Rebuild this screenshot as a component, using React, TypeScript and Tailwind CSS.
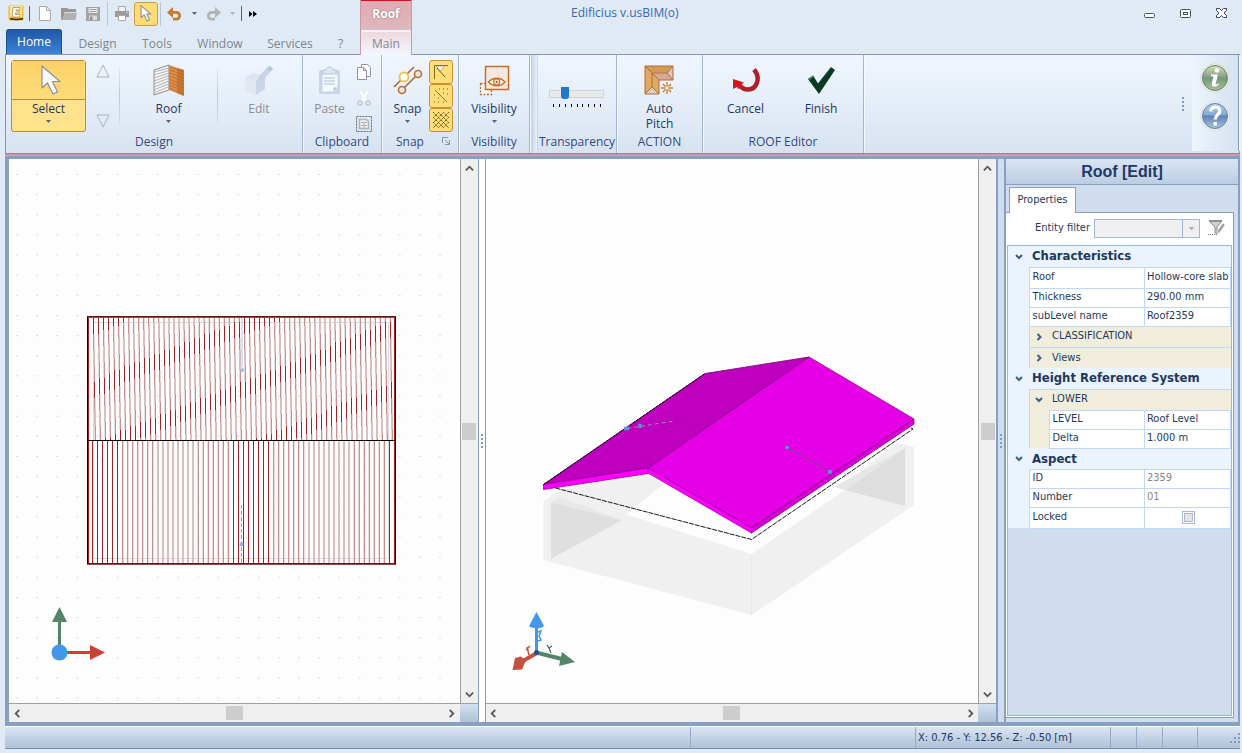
import React, { useState } from "react";

const MENU = [
  { label: "Design", width: "w-[71px]" },
  { label: "Tools", width: "w-[48px]" },
  { label: "Window", width: "w-[78px]" },
  { label: "Services", width: "w-[62px]" },
  { label: "?", width: "w-[39px]" },
];

const Caret: React.FC<{ className?: string }> = ({ className = "text-[#5a6472]" }) => (
  <svg width="5" height="3" viewBox="0 0 5 3" className={className}>
    <path d="M0 0h5L2.5 3z" fill="currentColor" />
  </svg>
);

const Divider: React.FC = () => (
  <div className="my-2 w-px self-stretch bg-gradient-to-b from-[#dfe8f3] via-[#b9c7da] to-[#d2deed]" />
);

/* ---------- quick access icons ---------- */

const AppIcon = () => (
  <svg width="17" height="17" viewBox="0 0 17 17">
    <rect x="0.500" y="0.500" width="15" height="15" rx="1" fill="#f0bd3a" />
    <rect x="2" y="1" width="12" height="11" fill="#fbe7a3" />
    <path d="M5 2.500h7v2.500H8v1h3v2H7.500v1.500H12V12H4z" fill="#fff" stroke="#a8822e" strokeWidth="0.700" />
    <path d="M2 13c4 1 9 1 13 0v1.500c-4 1-9 1-13 0z" fill="#302813" />
  </svg>
);

const NewIcon = () => (
  <svg width="12" height="15" viewBox="0 0 12 15">
    <path d="M0.500 0.500h7l4 4v10h-11z" fill="#fff" stroke="#a9a9a9" />
    <path d="M7.500 0.500v4h4" fill="none" stroke="#a9a9a9" />
  </svg>
);

const OpenIcon = () => (
  <svg width="16" height="14" viewBox="0 0 16 14">
    <path d="M0 1h6l1.500 1H15v4H3.500L2 13H1L0 12z" fill="#989898" />
    <path d="M3.500 5.500H16L14.500 13H2z" fill="#b2b2b2" />
    <path d="M3 5.500h13" stroke="#d8d8d8" />
  </svg>
);

const SaveIcon = () => (
  <svg width="14" height="14" viewBox="0 0 14 14">
    <path d="M0 0h14v14H0z" fill="#a3a3a3" />
    <path d="M2.500 1h9v5h-9z" fill="#e6ebf0" />
    <path d="M3.500 2.500h7M3.500 4.500h7" stroke="#a3a3a3" />
    <path d="M3 8.500h8V13H3z" fill="#d7dade" />
    <path d="M4 9.500h2.500V13H4z" fill="#8d8d8d" />
  </svg>
);

const PrintIcon = () => (
  <svg width="14" height="15" viewBox="0 0 14 15">
    <path d="M3.500 0.500h7v5h-7z" fill="#eef0f3" stroke="#a8a8a8" />
    <path d="M0 5h14v6H0z" fill="#9b9b9b" />
    <path d="M3.500 9.500h7v5h-7z" fill="#fff" stroke="#a8a8a8" />
    <path d="M11 6.500h1.500" stroke="#e6e6e6" />
  </svg>
);

const PointerIcon: React.FC<{ small?: boolean }> = ({ small }) => (
  <svg width={small ? 12 : 20} height={small ? 17 : 31} viewBox="0 0 20 31">
    <path
      d="M1 1v22l5.500-5L12 29l4.500-2-5-10.500H19z"
      fill="#f7f8f9"
      stroke="#8b8f96"
      strokeWidth={small ? 2 : 1.2}
      strokeLinejoin="round"
    />
  </svg>
);

const UndoIcon: React.FC<{ redo?: boolean }> = ({ redo }) => (
  <svg width="15" height="14" viewBox="0 0 15 14">
    <g transform={redo ? "translate(15 0) scale(-1 1)" : undefined} fill={redo ? "#b4b4b4" : "#c87a34"}>
      <path d="M0 5.500 6 0v4h3c3 0 5 2 5 4.700S12 13.500 9 13.500H6v-2.700h2.700c1.600 0 2.500-.9 2.500-2.100S10.300 6.800 8.700 6.800H6V11z" />
    </g>
  </svg>
);

/* ---------- ribbon icons ---------- */

const RoofIcon = () => (
  <svg width="32" height="34" viewBox="0 0 32 34">
    <path d="M1 6 16 1v25L1 31z" fill="#f4f4f4" stroke="#8d8d8d" />
    <path
      d="M1 8l15-4M1 11l15-4.500M1 14l15-5M1 17l15-5.500M1 20l15-6M1 23l15-6M1 26l15-6.500M1 29l15-6.500"
      stroke="#a3a3a3"
      strokeWidth="0.800"
    />
    <path d="m16 1 15 5v26l-15-6z" fill="#e0914a" />
    <path
      d="m16 3 15 5M16 6l15 5M16 9l15 5M16 12l15 5M16 15l15 6M16 18l15 6M16 21l15 6M16 24l15 6"
      stroke="#c07234"
      strokeWidth="1.200"
    />
    <path d="M24 4 31 6v26l-7-3z" fill="#bf6b2b" opacity="0.700" />
  </svg>
);

const EditIcon = () => (
  <svg width="30" height="32" viewBox="0 0 30 32" opacity="0.700">
    <path d="m1 13 8-5 12 3v13l-9 6-11-4z" fill="#d5dfec" />
    <path d="m12 16 9-5v13l-9 6z" fill="#bfcddf" />
    <path d="m1 13 11 3v14L1 26z" fill="#e0e6f0" />
    <path d="m12 18 3-7L25 1l4 3-10 11z" fill="#b8c7db" />
    <path d="m23 3 3-2 3 3-3 2z" fill="#9fb3cc" />
  </svg>
);

const PasteIcon = () => (
  <svg width="24" height="30" viewBox="0 0 24 30">
    <rect x="1" y="4" width="21" height="24" rx="2" fill="#c7d5e6" />
    <path d="M8 4c0-4 7-4 7 0h3v4H5V4z" fill="#dde6f1" stroke="#b6c6d9" />
    <path d="M4.500 8.500h15v13l-4 4h-11z" fill="#f4f8fd" />
    <path d="M6 12h11M6 15h11M6 18h11" stroke="#c3d0e2" strokeWidth="1.500" />
    <path d="M15.500 25.500v-4h4z" fill="#b5c5d8" />
  </svg>
);

const CopyIcon = () => (
  <svg width="14" height="17" viewBox="0 0 14 17">
    <path d="M4.500 0.500h6l3 3v9h-9z" fill="#fff" stroke="#8f959b" />
    <path d="M0.500 3.500h6l3 3v9h-9z" fill="#fff" stroke="#8f959b" />
    <path d="M6.500 3.500v3h3" fill="none" stroke="#8f959b" />
  </svg>
);

const CutIcon = () => (
  <svg width="14" height="15" viewBox="0 0 14 15">
    <path d="m3 0 6 10M11 0 5 10" stroke="#fff" strokeWidth="2" />
    <circle cx="3" cy="12" r="2" fill="none" stroke="#c3c8ce" strokeWidth="1.500" />
    <circle cx="11" cy="12" r="2" fill="none" stroke="#c3c8ce" strokeWidth="1.500" />
  </svg>
);

const SelectAllIcon = () => (
  <svg width="16" height="16" viewBox="0 0 16 16">
    <rect x="0.500" y="0.500" width="15" height="15" fill="none" stroke="#5d6f68" strokeDasharray="2 1" />
    <path d="M3.500 3.500h7l2 2v7h-9z" fill="#eceef0" stroke="#b0b4b8" strokeWidth="1.500" />
    <path d="M5 6.500h6M5 9.500h6M8 6v6" stroke="#b0b4b8" />
  </svg>
);

const SnapIcon = () => (
  <svg width="30" height="30" viewBox="0 0 30 30">
    <path d="M1 21 21 1M9 24 25 8" stroke="#a66a3c" strokeWidth="1.600" />
    <circle cx="11" cy="11" r="4.500" fill="#fff" stroke="#f3c14c" strokeWidth="1.800" />
    <circle cx="25" cy="8" r="3.500" fill="#f3e8dd" stroke="#b86f37" strokeWidth="1.600" />
    <circle cx="9" cy="24" r="3.500" fill="#f3e8dd" stroke="#b86f37" strokeWidth="1.600" />
  </svg>
);

const SnapAngle = () => (
  <svg width="16" height="16" viewBox="0 0 16 16" fill="none">
    <path d="M1.500 15V1.500H15" stroke="#8a6a20" />
    <path d="M3 2h9L7.500 7z" fill="#f5f1dc" stroke="#8a8a70" strokeDasharray="1 1" />
    <path d="m4 4 8 9" stroke="#6d5a2a" />
  </svg>
);

const SnapLine = () => (
  <svg width="16" height="16" viewBox="0 0 16 16">
    <path d="m2 2 12 12" stroke="#7a6428" strokeWidth="0.800" />
    <path
      d="M1 7h1M1 14h1M5 14h1M6 1h1M10 1h1M14 1h1M14 6h1M10 14h1M5 10h1M10 5h1"
      stroke="#6a581f"
    />
  </svg>
);

const SnapMesh = () => (
  <svg width="16" height="16" viewBox="0 0 16 16">
    <path
      d="M0 0l16 16M5 0l11 11M10 0l6 6M0 5l11 11M0 10l6 6M16 0 0 16M11 0 0 11M6 0 0 6M16 5 5 16M16 10l-6 6"
      stroke="#6b571d"
      strokeDasharray="1.500 0.700"
    />
  </svg>
);

const VisibilityIcon = () => (
  <svg width="31" height="31" viewBox="0 0 31 31">
    <path d="M1.500 18.500h11v11h-11z" fill="#fbf7f2" stroke="#b4693a" strokeWidth="1.300" strokeDasharray="2 1.500" />
    <path d="M6.500 1.500h23v23h-23z" fill="#f5e8dc" stroke="#c56f2e" strokeWidth="1.500" />
    <path d="M9.500 17c4.500-5 12-5 16.500 0-4.500 5-12 5-16.500 0z" fill="#fdf4ea" stroke="#c56f2e" strokeWidth="1.300" />
    <circle cx="17.700" cy="17" r="3" fill="none" stroke="#c56f2e" strokeWidth="1.200" />
    <circle cx="17.700" cy="17" r="1.200" fill="#b4693a" />
  </svg>
);

const AutoPitchIcon = () => (
  <svg width="31" height="31" viewBox="0 0 31 31">
    <path d="M1 1h28v14H15v14H1z" fill="#dda965" />
    <path d="m1 1 7 6h15l6-6z" fill="#d39a58" />
    <path d="m29 1-6 7 6 7z" fill="#dccab9" />
    <path d="M1 29 8 22l7 7z" fill="#d8cfc6" />
    <path d="M8 8h15l6 7H15z" fill="#d3aa98" />
    <path d="M1 1h28v14H15v14H1zM1 1l14 14M8 8v14l-7 7M8 22l7 7M8 8h15l6-7M23 8l6 7" fill="none" stroke="#b36d2e" />
    <path d="M23 17v12M17 23h12M19 19l8 8M27 19l-8 8" stroke="#c77c34" strokeWidth="1.300" />
    <circle cx="23" cy="23" r="2" fill="#fff" stroke="#e8a43a" />
  </svg>
);

const CancelIcon = () => (
  <svg width="28" height="25" viewBox="0 0 28 25">
    <path d="M22 1.500c7 8 3 20-6 20-4 0-7-2-9-5" fill="none" stroke="#b01f27" strokeWidth="4.500" />
    <path d="m1 11 11 3.500-3 2 1.500 2-4 2.500-1.500-2L1 21z" fill="#d2151e" />
  </svg>
);

const FinishIcon = () => (
  <svg width="29" height="29" viewBox="0 0 29 29">
    <path d="m1 13 5-3.500 5 8L24 1l4 3-16 24z" fill="#0b3a22" />
    <path d="m1 13 5-3.500.8 1.200L2.200 14z" fill="#5f7f6e" />
  </svg>
);

const RoundIcon: React.FC<{ kind: "info" | "help" }> = ({ kind }) => {
  const info = kind === "info";
  return (
    <svg width="30" height="30" viewBox="0 0 30 30">
      <defs>
        <linearGradient id={kind} x1="0" y1="0" x2="0" y2="1">
          <stop offset="0" stopColor={info ? "#d5e3b7" : "#b7cde8"} />
          <stop offset="0.450" stopColor={info ? "#8c9c8c" : "#83abd8"} />
          <stop offset="0.500" stopColor={info ? "#6f9a74" : "#5f84b0"} />
          <stop offset="1" stopColor={info ? "#a9bfa3" : "#a8c3e2"} />
        </linearGradient>
      </defs>
      <circle cx="15" cy="15" r="14.500" fill="#d6d4d0" />
      <circle cx="15" cy="15" r="13.800" fill="#f6f5f2" />
      <circle cx="15" cy="15" r="12.500" fill={`url(#${kind})`} stroke={info ? "#5b875f" : "#5c83b5"} />
      {info ? (
        <g fill="#fff">
          <circle cx="17" cy="7.500" r="2.300" />
          <path d="M11 11.500h7l-2.300 9.300c-.2 1.200 1 1 2.600-.6l.8.800c-2 3-8 4-7.300-.3l1.700-7.400H11z" />
        </g>
      ) : (
        <g>
          <path
            d="M10.500 10.500c.5-6 10-5.500 9.300 0-.3 3-4.600 3.500-4.600 8"
            fill="none"
            stroke="#fff"
            strokeWidth="3.200"
          />
          <rect x="13.500" y="21" width="3.500" height="3.500" fill="#fff" />
        </g>
      )}
    </svg>
  );
};

/* ---------- ribbon ---------- */

const Group: React.FC<{
  label: string;
  className?: string;
  launcher?: boolean;
  children: React.ReactNode;
}> = ({ label, className = "", launcher, children }) => (
  <section
    className={`relative flex shrink-0 flex-col border-r border-[#a3b6cf] shadow-[1px_0_0_#f4f9ff] ${className}`}
  >
    <div className="flex flex-1 items-start pt-[5px]">{children}</div>
    <h2 className="pb-[3px] text-center leading-4 text-[#35477d]">{label}</h2>
    {launcher && (
      <button aria-label="Snap settings" className="absolute right-2 bottom-2">
        <svg width="8" height="8" viewBox="0 0 8 8" fill="none" stroke="#8b96a8">
          <path d="M0.500 6V0.500H6M3 3l4 4M7.500 3v4.500H3" />
        </svg>
      </button>
    )}
  </section>
);

const BigButton: React.FC<{
  label: React.ReactNode;
  icon: React.ReactNode;
  caret?: boolean;
  disabled?: boolean;
  className?: string;
}> = ({ label, icon, caret, disabled, className = "" }) => (
  <button
    disabled={disabled}
    className={`flex h-[72px] flex-col items-center leading-[15px] ${
      disabled ? "text-[#8d8d8d]" : "text-[#1f3864]"
    } ${className}`}
  >
    <span className="flex h-[41px] shrink-0 items-center">{icon}</span>
    <span>{label}</span>
    {caret && (
      <span className="pt-1">
        <Caret />
      </span>
    )}
  </button>
);

const Ribbon: React.FC = () => {
  const [opacity, setOpacity] = useState(24);

  return (
    <div className="flex h-[99px] shrink-0 border border-b-0 border-[#8d8fae] bg-gradient-to-b from-[#eff6fe] via-[#e5edf8] to-[#d7e3f1] text-xs">
      <Group label="Design" className="w-[297px]">
        <div className="flex w-full items-start pl-[5px]">
          <button className="flex h-[72px] w-[75px] flex-col items-center rounded-[3px] border border-[#c0883a] bg-[#ffe38c] leading-[15px] text-[#1f3864]">
            <span className="flex h-[39px] w-full shrink-0 items-center justify-center border-b border-[#c0883a] bg-gradient-to-b from-[#fbd267] to-[#ffdc78] pl-1">
              <PointerIcon />
            </span>
            <span className="pt-px">Select</span>
            <span className="pt-1">
              <Caret />
            </span>
          </button>
          <div className="flex h-[72px] w-[33px] flex-col items-center justify-between py-1">
            <button aria-label="Previous">
              <svg width="14" height="14" viewBox="0 0 14 14">
                <path d="M7 1 13 13H1z" fill="none" stroke="#a9b3c0" />
              </svg>
            </button>
            <button aria-label="Next">
              <svg width="14" height="14" viewBox="0 0 14 14">
                <path d="M7 13 13 1H1z" fill="none" stroke="#a9b3c0" />
              </svg>
            </button>
          </div>
          <Divider />
          <BigButton label="Roof" icon={<RoofIcon />} caret className="w-[97px]" />
          <Divider />
          <BigButton label="Edit" icon={<EditIcon />} disabled className="w-[82px]" />
        </div>
      </Group>

      <Group label="Clipboard" className="w-[79px]">
        <BigButton label="Paste" icon={<PasteIcon />} disabled className="w-[53px]" />
        <div className="flex h-[72px] flex-col items-center justify-between pt-1">
          <button aria-label="Copy"><CopyIcon /></button>
          <button aria-label="Cut"><CutIcon /></button>
          <button aria-label="Paste special"><SelectAllIcon /></button>
        </div>
      </Group>

      <Group label="Snap" className="w-[77px] pr-5 [&>div]:-mr-5" launcher>
        <BigButton label="Snap" icon={<SnapIcon />} caret className="w-[47px] pl-1" />
        <div className="flex flex-col">
          {[<SnapAngle />, <SnapLine />, <SnapMesh />].map((icon, i) => (
            <button
              key={i}
              aria-label={`Snap mode ${i + 1}`}
              className="flex h-6 w-6 items-center justify-center rounded-[3px] border border-[#c99239] bg-[#ffde77]"
            >
              {icon}
            </button>
          ))}
        </div>
      </Group>

      <Group label="Visibility" className="w-[71px]">
        <BigButton label="Visibility" icon={<VisibilityIcon />} caret className="w-full" />
      </Group>

      <div className="w-2 shrink-0 border-r border-[#c9d6e8] bg-gradient-to-r from-[#bccbe0] to-[#e9f1fb]" />

      <Group label="Transparency" className="w-[79px]">
        <div className="w-full px-[11px] pt-[26px]">
          <input
            type="range"
            aria-label="Transparency"
            value={opacity}
            onChange={(e) => setOpacity(Number(e.target.value))}
            className="block h-[15px] w-[55px] appearance-none bg-transparent [&::-webkit-slider-runnable-track]:h-2 [&::-webkit-slider-runnable-track]:border [&::-webkit-slider-runnable-track]:border-[#d2d2d2] [&::-webkit-slider-runnable-track]:bg-[#e7eaea] [&::-webkit-slider-thumb]:-mt-1 [&::-webkit-slider-thumb]:h-3 [&::-webkit-slider-thumb]:w-2 [&::-webkit-slider-thumb]:appearance-none [&::-webkit-slider-thumb]:rounded-b-[3px] [&::-webkit-slider-thumb]:bg-[#2277cf]"
          />
          <div className="flex justify-between pt-[3px] pr-1 pl-1">
            {Array.from({ length: 9 }, (_, i) => (
              <span key={i} className="h-[3px] w-px bg-black" />
            ))}
          </div>
        </div>
      </Group>

      <Group label="ACTION" className="w-[86px]">
        <BigButton
          label={<>Auto<br />Pitch</>}
          icon={<AutoPitchIcon />}
          className="w-full"
        />
      </Group>

      <Group label="ROOF Editor" className="w-[161px]">
        <BigButton label="Cancel" icon={<CancelIcon />} className="w-[85px]" />
        <BigButton label="Finish" icon={<FinishIcon />} className="w-[66px]" />
      </Group>

      <div className="flex flex-1 items-center justify-end pr-2">
        <Grip />
      </div>
      <div className="mb-[2px] flex w-[47px] flex-col items-center gap-2 border-r border-[#7f9cc2] bg-gradient-to-r from-[#edf4fc] to-[#d5e2f0] pt-2 shadow-[2px_0_0_#f3f8fe]">
        <button aria-label="Information"><RoundIcon kind="info" /></button>
        <button aria-label="Help"><RoundIcon kind="help" /></button>
      </div>
    </div>
  );
};

const Grip: React.FC = () => (
  <div className="flex flex-col gap-[2px]">
    {[0, 1, 2, 3].map((i) => (
      <span key={i} className="h-[2px] w-[2px] bg-[#7f9cc6]" />
    ))}
  </div>
);

/* ---------- viewports ---------- */

const ARROWS = {
  up: "M1 7 5 3l4 4",
  down: "m1 3 4 4 4-4",
  left: "M7 1 3 5l4 4",
  right: "m3 1 4 4-4 4",
};

const ScrollArrow: React.FC<{ dir: keyof typeof ARROWS }> = ({ dir }) => (
  <button aria-label={`Scroll ${dir}`} className="flex h-4 w-4 shrink-0 items-center justify-center">
    <svg width="9" height="9" viewBox="0 0 10 10">
      <path d={ARROWS[dir]} fill="none" stroke="#555a52" strokeWidth="2" />
    </svg>
  </button>
);

const Viewport: React.FC<{ children: React.ReactNode }> = ({ children }) => (
  <div className="grid h-full w-full grid-cols-[minmax(0,1fr)_18px] grid-rows-[minmax(0,1fr)_19px]">
    <div className="overflow-hidden bg-[#fdfdfd]">{children}</div>
    <div className="flex flex-col items-center border-l border-[#a0a0a0] bg-[#efefef] pt-px pb-px">
      <ScrollArrow dir="up" />
      <div className="flex flex-1 items-center">
        <div className="h-[17px] w-[14px] bg-[#cdcdcd]" />
      </div>
      <ScrollArrow dir="down" />
    </div>
    <div className="flex items-center border-t border-[#a0a0a0] bg-[#efefef]">
      <ScrollArrow dir="left" />
      <div className="flex flex-1 justify-center">
        <div className="h-[14px] w-[17px] bg-[#cdcdcd]" />
      </div>
      <ScrollArrow dir="right" />
    </div>
    <div className="border-t border-[#a0a0a0] bg-gradient-to-b from-[#d3e0f0] to-[#afc1d7]" />
  </div>
);

type Shades = { dark: string; mid: string; faint: string; pale: string };

// One hatch line, split in runs so that each run covers whole pixel columns.
const hatchLine = (x0: number, top: number, bottom: number, slope: number, out: Shades) => {
  const step = slope ? 4 : bottom - top;
  for (let y = top; y < bottom; y += step) {
    const h = Math.min(step, bottom - y);
    const x = x0 + slope * (y - top);
    const col = Math.floor(x);
    const off = x - col - 0.5;
    const side = off > 0 ? col + 1 : col - 1;
    const box = (c: number) => `M${c} ${y}h1v${h}h-1z`;
    if (Math.abs(off) < 0.13) {
      out.dark += box(col);
    } else if (Math.abs(off) < 0.36) {
      out.mid += box(col);
      out.faint += box(side);
    } else {
      out.pale += box(col) + box(side);
    }
  }
};

const hatch = (() => {
  const out: Shades = { dark: "", mid: "", faint: "", pale: "" };
  for (let i = 0; i < 60; i++) {
    hatchLine(93.4 + i * 5.033, 318, 440, 1 / 62, out);
    hatchLine(92.45 + i * 5.033, 441, 563, 0, out);
  }
  return out;
})();

const PlanView: React.FC = () => (
  <svg className="block h-full w-full" role="img" aria-label="Roof plan">
    <defs>
      <pattern id="dots" x="16" y="315" width="20.140" height="20.140" patternUnits="userSpaceOnUse">
        <rect width="2" height="1" fill="#d9d9d9" />
      </pattern>
    </defs>
    <g transform="translate(-9 -159)">
      <rect x="9" y="159" width="100%" height="100%" fill="url(#dots)" />
      <rect x="93.500" y="322.500" width="295" height="236" fill="none" stroke="#dadada" />
      <g shapeRendering="crispEdges">
        <path d={hatch.dark} fill="#a02427" />
        <path d={hatch.mid} fill="#c58f8f" />
        <path d={hatch.faint} fill="#eadcdc" />
        <path d={hatch.pale} fill="#d9bfbf" />
      </g>
      <path d="M242 318v54" stroke="#c9dbee" strokeWidth="1.500" />
      <circle cx="242.300" cy="370" r="2" fill="#a9c4e0" />
      <path d="M241.500 505v58" stroke="#8fa9c4" strokeDasharray="4 2" />
      <circle cx="241.500" cy="544.500" r="2" fill="#8fb4dc" />
      <g shapeRendering="crispEdges">
        <path d="M88 318h1v246h-1zM394 318h1v246h-1z" fill="#a31d22" />
        <path d="M87 316h309v1H87zM87 563h309v1H87z" fill="#631518" />
        <path d="M87 317h309v1H87zM87 564h309v1H87z" fill="#8c4a4d" />
        <path d="M87 317h1v247h-1zM395 317h1v247h-1zM87 440h309v1H87z" fill="#000" />
      </g>
      <path d="M59.500 652V620" stroke="#558468" strokeWidth="3" />
      <path d="m59.500 607 7.500 15H52z" fill="#558468" />
      <path d="M60 652.500h31" stroke="#d13b38" strokeWidth="3" />
      <path d="m105 652.500-15 7.500v-15z" fill="#d13b38" />
      <circle cx="59.500" cy="652.500" r="8" fill="#4496e8" />
    </g>
  </svg>
);

const ModelView: React.FC = () => (
  <svg className="block h-full w-full" role="img" aria-label="Roof 3D model">
    <g transform="translate(-486 -159)">
      {/* walls */}
      <path d="M543.500 501 561 489l87-16 16 11-38 30 125.500 40L897 443l17 4v58L751.500 615l-208-55z" fill="#f0f0f0" />
      <path d="M664 484 627 515l124.500 39L845 490l-11-3 60-42-142 88z" fill="#fdfdfd" />
      <path d="m551 502 71 18-71 39z" fill="#dfdfdf" />
      <path d="m627 515-6 5 130 34z" fill="#f0f0f0" />
      <path d="m551 502 8-5 63 23z" fill="#e8e8e8" />
      <path d="M905 448v58l-60-16z" fill="#dedede" />
      <path d="m834 487 71-39-60 42z" fill="#e6e6e6" />
      <path d="M751.500 554v61" stroke="#e8e8e8" />
      {/* eave outline */}
      <path
        d="m544 485 207.500 54.500L913 429l-2-1"
        fill="none"
        stroke="#000"
        strokeWidth="0.900"
        strokeDasharray="5 1"
      />
      {/* roof */}
      <g strokeWidth="0.800" strokeLinejoin="round">
        <path d="M543.500 484.500 705 373.500l104-16.500-161 111z" fill="#bf00bf" stroke="#6b006b" />
        <path d="m809 357 105 62-162.500 109L648 468z" fill="#e600e6" stroke="#8d008d" />
        <path d="M543.500 484.500 648 468v5.500l-104.500 16z" fill="#ff00ff" stroke="#a000a0" />
        <path d="m648 468 103.500 60v5L648 473z" fill="#ff00ff" stroke="#a000a0" />
        <path d="M751.500 528 914 419v5L751.500 533z" fill="#d800d8" stroke="#8d008d" />
      </g>
      <path d="M543.500 484.500 705 373.500" stroke="#000" strokeDasharray="3 1" />
      <path d="m627 428.500 47-7.500" stroke="#8c9a96" strokeDasharray="4 3" />
      <path d="m784 446 47 26" stroke="#44606b" strokeDasharray="2 1" />
      <path d="M624 428.500h5M640 424v4M787 446v3M830 470v4" stroke="#45a0d0" strokeWidth="3.500" />
      {/* axes */}
      <path d="m538 653 24 6" stroke="#558468" strokeWidth="4" />
      <path d="m562 652 13 10-16 4z" fill="#558468" />
      <path d="m537 653-16 9" stroke="#c4523f" strokeWidth="4" />
      <path d="m515 658 6-1.500 5 4-4 9-9.500.5z" fill="#c4523f" />
      <path d="M536.500 651v-27" stroke="#4496e8" strokeWidth="3" />
      <path d="m536.500 612 7.500 14c-3 3-12 3-15 0z" fill="#4496e8" />
      <path d="m538 632 3-1-2 5 2 4-3 1" fill="none" stroke="#4496e8" strokeWidth="1.500" />
      <path d="m547 645 2 3 3-2m-3 2 2 5" fill="none" stroke="#3f5d5c" strokeWidth="1.200" />
      <path d="m526 650 4-4m-3 1 2 8" fill="none" stroke="#c4523f" strokeWidth="1.500" />
      <circle cx="536.500" cy="652.500" r="2.500" fill="#1d4e95" />
    </g>
  </svg>
);

/* ---------- properties ---------- */

const Chevron: React.FC<{ open?: boolean }> = ({ open = true }) => (
  <svg width="8" height="8" viewBox="0 0 8 8" className="mx-auto">
    <path d={open ? "M1 2 4 5l3-3" : "M2.500 1 5.500 4l-3 3"} fill="none" stroke="#3f5f84" strokeWidth="2" />
  </svg>
);

const LINE = "border border-[#c0d8f7]";

const SectionRow: React.FC<{ title: string }> = ({ title }) => (
  <tr className="h-[21px] bg-[#eaf3fe]">
    <td><Chevron /></td>
    <th colSpan={3} className="pl-[3px] text-left text-[13px] leading-4 font-bold text-[#1e395b]">
      {title}
    </th>
  </tr>
);

const SubRow: React.FC<{ title: string; open?: boolean }> = ({ title, open = false }) => (
  <tr className="h-[21px]">
    <td className="bg-[#eaf3fe]" />
    <td className="border-t border-l border-[#c0d8f7] bg-[#f0eddd]"><Chevron open={open} /></td>
    <td colSpan={2} className="border-t border-[#c0d8f7] bg-[#f0eddd] pl-[3px]">{title}</td>
  </tr>
);

const ValueRow: React.FC<{
  name: string;
  value: React.ReactNode;
  nested?: boolean;
  muted?: boolean;
  tall?: boolean;
}> = ({ name, value, nested, muted, tall }) => (
  <tr className={tall ? "h-[21px]" : "h-[19px]"}>
    <td className="bg-[#eaf3fe]" />
    {nested && <td className="border-l border-[#c0d8f7] bg-[#f0eddd]" />}
    <td colSpan={nested ? 1 : 2} className={`${LINE} bg-white pl-[3px]`}>{name}</td>
    <td className={`${LINE} bg-white pl-[2px] ${muted ? "text-[#858585]" : ""}`}>{value}</td>
  </tr>
);

const PropertiesPanel: React.FC = () => {
  const [locked, setLocked] = useState(false);

  return (
    <aside
      className="flex min-h-0 w-[234px] shrink-0 flex-col border-l-2 border-[#869fc2] bg-[#d0ddee] text-[11px] whitespace-nowrap text-[#1e395b]"
      style={{ fontFamily: '"DejaVu Sans Condensed", "DejaVu Sans", sans-serif' }}
    >
      <h1 className="h-[26px] border-b border-[#869fc2] bg-gradient-to-b from-[#d9e5f4] to-[#bccde2] text-center font-['Liberation_Sans',sans-serif] text-base leading-[25px] font-bold text-[#1f3864]">
        Roof [Edit]
      </h1>
      <div className="pt-[2px] pl-[3px]">
        <button className="relative -mb-px h-[26px] w-[67px] border border-b-0 border-[#869fc2] bg-white text-center">
          Properties
        </button>
      </div>
      <div className="mr-1 mb-1 flex min-h-0 flex-1 flex-col border border-l-0 border-[#869fc2] bg-white pt-1">
        <div className="flex h-[22px] items-center justify-end pr-2">
          <label htmlFor="filter" className="pr-1">Entity filter</label>
          <div className="relative h-[19px] w-[106px]">
            <select id="filter" disabled className="h-full w-full appearance-none border border-[#a3b6d0] bg-[#efefef] opacity-100" />
            <span className="pointer-events-none absolute inset-y-0 right-0 flex w-[18px] items-center justify-center border border-[#a3b6d0]">
              <Caret className="scale-125 text-[#a7b2c1]" />
            </span>
          </div>
          <button aria-label="Edit filter" className="ml-2">
            <svg width="17" height="16" viewBox="0 0 17 16">
              <path d="M1 1h13L9 7v7l-2-1V7z" fill="#d0d0d0" stroke="#8d8d8d" />
              <path d="M1 0h13v2H1z" fill="#8f8f8f" />
              <path d="m9 14 1-4 5-7 2 2-5 7z" fill="#9a9a9a" stroke="#f5f5f5" strokeWidth="0.600" />
              <path d="M0 14.500h9" stroke="#777" strokeDasharray="1 1" />
            </svg>
          </button>
        </div>
        <div className="mx-px mt-[6px] mb-px flex-1 border border-[#9db4d3] bg-[#d0ddee]">
          <table className="w-full table-fixed border-collapse">
            <colgroup>
              <col className="w-[21px]" />
              <col className="w-5" />
              <col />
              <col className="w-[86px]" />
            </colgroup>
            <tbody>
              <SectionRow title="Characteristics" />
              <ValueRow name="Roof" value="Hollow-core slab" tall />
              <ValueRow name="Thickness" value="290.00 mm" />
              <ValueRow name="subLevel name" value="Roof2359" />
              <SubRow title="CLASSIFICATION" />
              <SubRow title="Views" />
              <SectionRow title="Height Reference System" />
              <SubRow title="LOWER" open />
              <ValueRow name="LEVEL" value="Roof Level" nested />
              <ValueRow name="Delta" value="1.000 m" nested />
              <SectionRow title="Aspect" />
              <ValueRow name="ID" value="2359" muted />
              <ValueRow name="Number" value="01" muted />
              <ValueRow
                name="Locked"
                value={
                  <input
                    type="checkbox"
                    aria-label="Locked"
                    checked={locked}
                    onChange={(e) => setLocked(e.target.checked)}
                    className="mx-auto block h-[13px] w-[13px] appearance-none border border-[#a9b8d4] bg-[#e4e4e6] shadow-[inset_0_0_0_1px_#fff,inset_0_0_0_2px_#b4bac8] checked:bg-[#5b7bb0]"
                  />
                }
                tall
              />
            </tbody>
          </table>
        </div>
      </div>
    </aside>
  );
};

/* ---------- title bar ---------- */

const TitleBar: React.FC = () => (
  <header className="flex h-[54px] shrink-0 pl-[6px] text-xs">
    <div className="flex w-[354px] shrink-0 flex-col justify-between">
      <div className="flex h-[27px] items-center">
        <button aria-label="Application menu" className="ml-[2px]"><AppIcon /></button>
        <span className="mr-[9px] ml-1 h-[15px] w-px bg-[#56616d]" />
        <button aria-label="New" className="mr-[10px]"><NewIcon /></button>
        <button aria-label="Open" className="mr-[9px]"><OpenIcon /></button>
        <button aria-label="Save" className="mr-[7px]"><SaveIcon /></button>
        <span className="mr-[7px] h-6 w-px bg-[#b8c6d8]" />
        <button aria-label="Print" className="mr-[5px]"><PrintIcon /></button>
        <button
          aria-label="Select"
          className="flex h-6 w-6 items-center justify-center rounded-[3px] border border-[#cf9a40] bg-[#ffdc76]"
        >
          <PointerIcon small />
        </button>
        <span className="mr-[6px] ml-[2px] h-6 w-px bg-[#b8c6d8]" />
        <button aria-label="Undo"><UndoIcon /></button>
        <button aria-label="Undo history" className="mr-[9px] ml-[10px]"><Caret /></button>
        <button aria-label="Redo"><UndoIcon redo /></button>
        <button aria-label="Redo history" className="ml-[9px]"><Caret className="text-[#aab0b8]" /></button>
        <span className="mr-[7px] ml-[6px] h-[15px] w-px bg-[#56616d]" />
        <button aria-label="More commands">
          <svg width="8" height="6" viewBox="0 0 8 6">
            <path d="M0 0v6l3.500-3zM4 0v6l4-3z" fill="#000" />
          </svg>
        </button>
      </div>
      <nav className="flex h-[25px] items-stretch text-[#7d858f]">
        <button className="w-[57px] rounded-t-[3px] border border-b-0 border-[#1c4f9b] bg-gradient-to-b from-[#2057a8] to-[#3d84d8] text-white">
          Home
        </button>
        {MENU.map((item) => (
          <button key={item.label} className={`shrink-0 pt-1 ${item.width}`}>
            {item.label}
          </button>
        ))}
      </nav>
    </div>
    <div className="z-10 -mb-px flex w-[52px] shrink-0 flex-col border-x border-[#c79aa6] text-center">
      <div className="h-[30px] border-t border-[#c81626] bg-gradient-to-b from-[#e3a9b1] to-[#dcb9bf] leading-[26px] font-bold text-white [text-shadow:0_0_2px_#8f6a70]">
        Roof
      </div>
      <button className="h-[25px] rounded-t-[3px] border-t-2 border-[#f8f2f5] bg-gradient-to-b from-[#ecd9df] to-[#f3f8fe] text-[#858590]">
        Main
      </button>
    </div>
    <div className="flex-1 pt-[5px] pl-[159px] leading-4 text-[#3568b8]">Edificius v.usBIM(o)</div>
    <div className="flex h-[26px] items-center gap-[25px] pr-[15px]">
      <button aria-label="Minimize">
        <svg width="11" height="11" viewBox="0 0 11 11">
          <rect x="0.500" y="5.500" width="10" height="4" rx="1" fill="#fff" stroke="#3f5a5e" />
        </svg>
      </button>
      <button aria-label="Restore">
        <svg width="11" height="9" viewBox="0 0 11 9">
          <rect x="0.500" y="0.500" width="10" height="8" rx="1" fill="#fff" stroke="#3f5a5e" />
          <rect x="3.500" y="3.500" width="4" height="2" fill="none" stroke="#3f5a5e" />
        </svg>
      </button>
      <button aria-label="Close">
        <svg width="11" height="10" viewBox="0 0 11 10">
          <path
            d="M0.500 0.500h3l2 2 2-2h3v2L8 5l2.500 2.500v2h-3l-2-2-2 2h-3v-2L3 5 .5 2.500z"
            fill="#fff"
            stroke="#353f68"
          />
        </svg>
      </button>
    </div>
  </header>
);

const StatusBar: React.FC = () => (
  <footer className="flex h-[23px] shrink-0 items-stretch border-t border-b border-t-white border-b-[#6f8fba] bg-gradient-to-b from-[#dbe6f4] via-[#c3d2e5] to-[#b0c2d8] text-[11px] leading-[22px] text-[#1f3864]">
    <div className="w-[686px] border-r border-[#94a9c6]" />
    <div className="flex-1 border-r border-[#94a9c6]" />
    <output
      className="w-[195px] border-r border-[#94a9c6] pl-[2px] whitespace-nowrap"
      style={{ fontFamily: '"DejaVu Sans Condensed", "DejaVu Sans", sans-serif' }}
    >
      X: 0.76 - Y: 12.56 - Z: -0.50 [m]
    </output>
    <div className="w-[26px] border-r border-[#94a9c6]" />
    <div className="w-[26px] border-r border-[#94a9c6]" />
    <div className="w-[35px] border-r border-[#94a9c6]" />
    <div className="flex w-[42px] items-end justify-end pb-1">
      <svg width="11" height="11" viewBox="0 0 11 11">
        <path d="M9 0h2v2H9zM5 4h2v2H5zM9 4h2v2H9zM1 8h2v2H1zM5 8h2v2H5zM9 8h2v2H9z" fill="#7f9cc6" />
      </svg>
    </div>
  </footer>
);

const App: React.FC = () => {
  return (
    <div className="flex h-screen flex-col overflow-hidden bg-[#e0eaf4] pb-1 font-['Open_Sans','Noto_Sans',sans-serif]">
      <TitleBar />
      <div className="mr-[2px] ml-[5px] flex min-h-0 flex-1 flex-col">
        <Ribbon />
        <div className="h-[3px] shrink-0 bg-gradient-to-b from-[#a5778f] to-[#d3b3c1]" />
        <main className="flex min-h-0 flex-1 border-4 border-t-[3px] border-r-2 border-[#869fc2] bg-[#d0ddee]">
          <div className="min-w-0 flex-[469]">
            <Viewport>
              <PlanView />
            </Viewport>
          </div>
          <div className="flex w-2 shrink-0 items-center justify-center border-x border-[#869fc2] bg-white">
            <Grip />
          </div>
          <div className="min-w-0 flex-[511]">
            <Viewport>
              <ModelView />
            </Viewport>
          </div>
          <div className="flex w-2 shrink-0 items-center justify-center border-l-2 border-[#869fc2]">
            <Grip />
          </div>
          <PropertiesPanel />
        </main>
        <StatusBar />
      </div>
    </div>
  );
};

export default App;
